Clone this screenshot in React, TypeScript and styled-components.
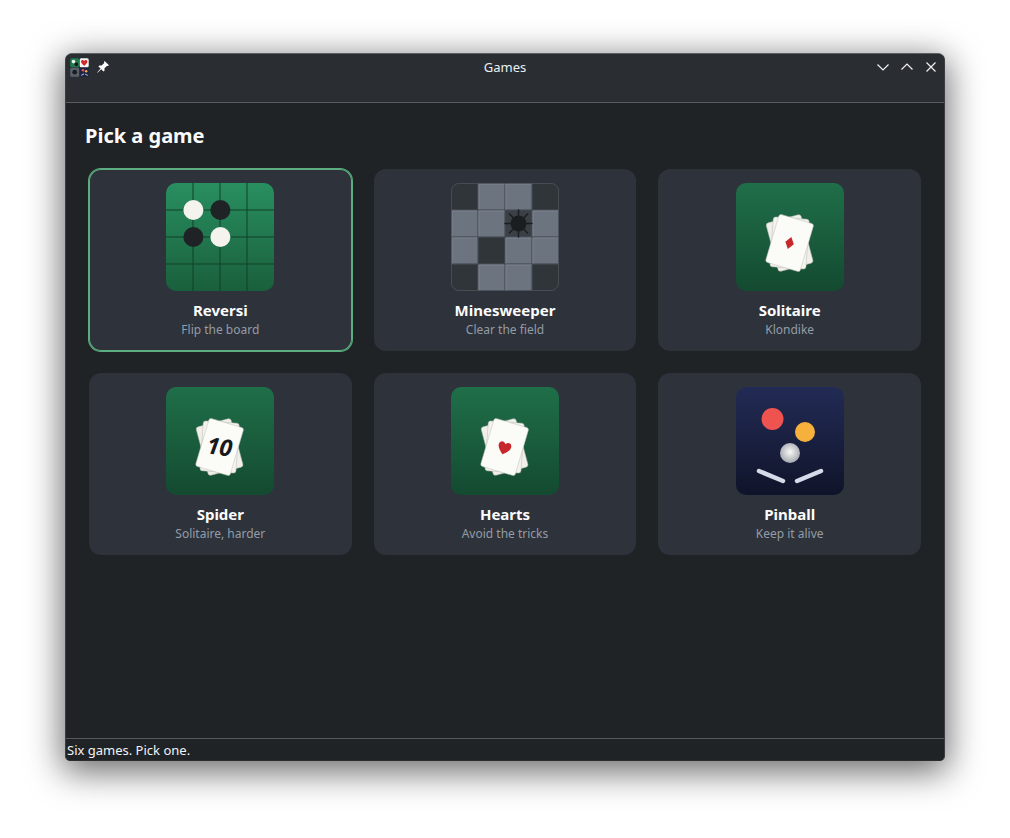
import React from 'react';
import styled, { createGlobalStyle } from 'styled-components';

const GlobalStyle = createGlobalStyle`
    html, body {
        margin: 0;
        height: 100%;
        background: #fff;
    }
    body {
        font-family: 'Noto Sans', sans-serif;
    }
`;

const Desktop = styled.div`
    box-sizing: border-box;
    width: 1010px;
    height: 838px;
    padding: 53px 65px 77px;
    overflow: hidden;
`;

const Window = styled.div`
    box-sizing: border-box;
    display: flex;
    flex-direction: column;
    height: 708px;
    background: #1f2326;
    border: 1px solid #3a3d41;
    border-top-color: #5c5f63;
    border-bottom-color: #2a2c30;
    border-radius: 7px 7px 5px 5px;
    box-shadow: 0 8px 34px 3px rgba(0, 0, 0, 0.58);
    overflow: hidden;
`;

const Header = styled.header`
    flex: none;
    height: 48px;
    background: #2a2e33;
    border-bottom: 1px solid #5a5e62;
`;

const TitleRow = styled.div`
    display: flex;
    align-items: center;
    height: 26px;
    padding: 0 5px 0 4px;
`;

const AppIcon = styled.svg`
    flex: none;
    width: 19px;
    height: 19px;
`;

const PinButton = styled.svg`
    flex: none;
    width: 14px;
    height: 14px;
    margin-left: 7px;
`;

const Title = styled.div`
    flex: 1;
    text-align: center;
    color: #eceff1;
    font-size: 13px;
    padding-left: 25px;
`;

const WindowControls = styled.div`
    display: flex;
    gap: 8px;
`;

const Control = styled.svg`
    display: block;
    width: 16px;
    height: 16px;
    fill: none;
    stroke: #f0f1f2;
    stroke-width: 1.2;
`;

const Content = styled.main`
    flex: 1;
    padding: 18px 23px 0 19px;
`;

const Heading = styled.h1`
    margin: 0 0 18px;
    color: #fcfcfc;
    font-size: 20px;
    font-weight: 700;
    line-height: 30px;
`;

const Grid = styled.div`
    display: grid;
    grid-template-columns: repeat(3, 1fr);
    gap: 22px;
    margin-left: 4px;
`;

const Card = styled.div<{ $selected?: boolean }>`
    box-sizing: border-box;
    height: 182px;
    display: flex;
    flex-direction: column;
    align-items: center;
    padding-top: 14px;
    background: #2e323b;
    border-radius: 12px;
    box-shadow: ${p => (p.$selected ? 'inset 0 0 0 1px #5cae80, 0 0 0 1px #5cae80' : 'none')};
`;

const Art = styled.svg`
    display: block;
    flex: none;
    width: 108px;
    height: 108px;
`;

const Name = styled.div`
    margin-top: 9px;
    color: #fcfcfc;
    font-size: 15px;
    font-weight: 700;
    line-height: 20px;
`;

const Description = styled.div`
    color: #949ca6;
    font-size: 12px;
    line-height: 17px;
    margin-top: 1px;
`;

const StatusBar = styled.footer`
    flex: none;
    height: 21px;
    border-top: 1px solid #55595d;
    padding-left: 1px;
    color: #f2f3f4;
    font-size: 13px;
    line-height: 23px;
`;

const felt = (id: string) => (
    <linearGradient id={id} x1="0" y1="0" x2="0" y2="1">
        <stop offset="0" stopColor="#1f6f49" />
        <stop offset="1" stopColor="#144a30" />
    </linearGradient>
);

const ReversiArt = () => (
    <>
        <defs>
            <linearGradient id="board" x1="0" y1="0" x2="0" y2="1">
                <stop offset="0" stopColor="#288f60" />
                <stop offset="1" stopColor="#1a5f3c" />
            </linearGradient>
        </defs>
        <rect width="108" height="108" rx="10" fill="url(#board)" />
        <path d="M27 0V108M54 0V108M81 0V108M0 27H108M0 54H108M0 81H108" stroke="#10402a" strokeWidth="1" />
        <circle cx="27.4" cy="27" r="10" fill="#f4f3ee" />
        <circle cx="54.4" cy="27" r="10" fill="#1f2326" />
        <circle cx="27.4" cy="54" r="10" fill="#1f2326" />
        <circle cx="54.4" cy="54" r="10" fill="#f4f3ee" />
    </>
);

const mineCells = ['dccd', 'ccmc', 'cdcc', 'dccd'];

const MinesweeperArt = () => (
    <>
        <defs>
            <clipPath id="mine-board">
                <rect width="108" height="108" rx="8" />
            </clipPath>
        </defs>
        <g clipPath="url(#mine-board)">
            <rect width="108" height="108" fill="#454b53" />
            {mineCells.map((row, y) =>
                row.split('').map((cell, x) => (
                    <g key={`${x}-${y}`}>
                        <rect
                            x={x * 27 + 0.6}
                            y={y * 27 + 0.6}
                            width="25.8"
                            height="25.8"
                            fill={cell === 'c' ? '#6c747f' : cell === 'd' ? '#30353a' : '#3b4046'}
                        />
                        {cell === 'c' && (
                            <path
                                d={`M${x * 27 + 1} ${y * 27 + 26.4}V${y * 27 + 1}H${x * 27 + 26.4}`}
                                fill="none"
                                stroke="#7f8792"
                                strokeWidth="0.9"
                            />
                        )}
                    </g>
                )),
            )}
        </g>
        <rect x="0.4" y="0.4" width="107.2" height="107.2" rx="8" fill="none" stroke="#4b5159" strokeWidth="0.8" />
        <g stroke="#1b1e21" strokeWidth="1.5" strokeLinecap="round">
            <path d="M67.5 27V54M54 40.5H81M58.5 31L76.5 50M76.5 31L58.5 50" />
        </g>
        <circle cx="67.5" cy="40.5" r="8" fill="#1b1e21" />
    </>
);

const PlayingCards = ({ children }: { children?: React.ReactNode }) => (
    <g transform="translate(53.6 60)">
        <rect x="-18" y="-25" width="36" height="50" rx="2.5" fill="#f0efe9" stroke="#b9bab4" strokeWidth="0.5" transform="rotate(-15)" />
        <rect x="-18" y="-25" width="36" height="50" rx="2.5" fill="#f4f3ee" stroke="#b9bab4" strokeWidth="0.5" transform="rotate(4)" />
        <g transform="rotate(16.5)">
            <rect x="-18" y="-25" width="36" height="50" rx="2.5" fill="#fbfbf8" stroke="#c2c3bd" strokeWidth="0.5" />
            {children}
        </g>
    </g>
);

const FeltArt = ({ id, children }: { id: string; children?: React.ReactNode }) => (
    <>
        <defs>{felt(id)}</defs>
        <rect width="108" height="108" rx="10" fill={`url(#${id})`} />
        <PlayingCards>{children}</PlayingCards>
    </>
);

const SolitaireArt = () => (
    <FeltArt id="felt-solitaire">
        <path d="M0 -6.2L4.4 0L0 6.2L-4.4 0Z" fill="#c7282b" />
    </FeltArt>
);

const SpiderArt = () => (
    <FeltArt id="felt-spider">
        <text
            x="0"
            y="8"
            textAnchor="middle"
            fontFamily="'Noto Sans', sans-serif"
            fontSize="23"
            fontWeight="700"
            fontStyle="italic"
            fill="#17191c"
            transform="rotate(-9)"
        >
            10
        </text>
    </FeltArt>
);

const HeartShape = () => (
    <path d="M0 7.6C-3.4 4.6 -6.4 2.2 -6.4 -1.4C-6.4 -5.4 -1.8 -6.2 0 -2.8C1.8 -6.2 6.4 -5.4 6.4 -1.4C6.4 2.2 3.4 4.6 0 7.6Z" fill="#c7282b" />
);

const HeartsArt = () => (
    <FeltArt id="felt-hearts">
        <HeartShape />
    </FeltArt>
);

const PinballArt = () => (
    <>
        <defs>
            <linearGradient id="table" x1="0" y1="0" x2="0" y2="1">
                <stop offset="0" stopColor="#222b55" />
                <stop offset="1" stopColor="#10142a" />
            </linearGradient>
            <radialGradient id="ball" cx="0.5" cy="0.45" r="0.55">
                <stop offset="0" stopColor="#f8f8f8" />
                <stop offset="1" stopColor="#a3a7ad" />
            </radialGradient>
        </defs>
        <rect width="108" height="108" rx="10" fill="url(#table)" />
        <circle cx="36.5" cy="32" r="11" fill="#ef5350" />
        <circle cx="69" cy="45" r="10" fill="#f6b13c" />
        <circle cx="54" cy="66" r="10" fill="url(#ball)" />
        <path d="M23 84L47 94M85 84L61 94" stroke="#d5dbe8" strokeWidth="4.5" strokeLinecap="round" />
    </>
);

const games = [
    { name: 'Reversi', description: 'Flip the board', art: <ReversiArt />, selected: true },
    { name: 'Minesweeper', description: 'Clear the field', art: <MinesweeperArt /> },
    { name: 'Solitaire', description: 'Klondike', art: <SolitaireArt /> },
    { name: 'Spider', description: 'Solitaire, harder', art: <SpiderArt /> },
    { name: 'Hearts', description: 'Avoid the tricks', art: <HeartsArt /> },
    { name: 'Pinball', description: 'Keep it alive', art: <PinballArt /> },
];

const App = () => {
    return (
        <Desktop>
            <GlobalStyle />
            <Window>
                <Header>
                    <TitleRow>
                        <AppIcon viewBox="0 0 19 19">
                            <rect x="0.2" y="0.2" width="9" height="9" rx="1.5" fill="#1f7a4f" />
                            <circle cx="3.5" cy="3.6" r="1.8" fill="#f4f3ee" />
                            <circle cx="6.4" cy="6.4" r="1.8" fill="#14181a" />
                            <rect x="9.7" y="0.2" width="9" height="9" rx="1.5" fill="#f6f5f1" />
                            <path d="M14.2 7.8C12.4 6.2 11 5 11 3.5C11 1.8 13.3 1.4 14.2 2.9C15.1 1.4 17.4 1.8 17.4 3.5C17.4 5 16 6.2 14.2 7.8Z" fill="#d3272c" />
                            <rect x="0.2" y="9.7" width="9" height="9" rx="1.5" fill="#5a616b" />
                            <circle cx="4.7" cy="14.2" r="2.4" fill="#1b1e21" />
                            <rect x="9.7" y="9.7" width="9" height="9" rx="1.5" fill="#1c2347" />
                            <circle cx="13" cy="12.3" r="1.3" fill="#ef5350" />
                            <circle cx="16.2" cy="13.3" r="1.2" fill="#f6b13c" />
                            <path d="M11.2 17.4L14 15.8M17.8 17.4L15.2 16.2" stroke="#d5dbe8" strokeWidth="0.9" />
                        </AppIcon>
                        <PinButton viewBox="0 0 14 14">
                            <path d="M8.6 1L13 5.2L12 6L11 5.8L8.4 8.4L8.6 10.6L7.5 11.5L5.2 9.2L1.6 12.8L1.2 12.4L4.6 8.6L2.4 6.4L3.3 5.4L5.6 5.6L8.2 3L8 2Z" fill="#fcfcfc" />
                        </PinButton>
                        <Title>Games</Title>
                        <WindowControls>
                            <Control viewBox="0 0 16 16">
                                <path d="M2.5 5.5L8 11L13.5 5.5" />
                            </Control>
                            <Control viewBox="0 0 16 16">
                                <path d="M2.5 10.5L8 5L13.5 10.5" />
                            </Control>
                            <Control viewBox="0 0 16 16">
                                <path d="M3.5 3.5L12.5 12.5M12.5 3.5L3.5 12.5" />
                            </Control>
                        </WindowControls>
                    </TitleRow>
                </Header>
                <Content>
                    <Heading>Pick a game</Heading>
                    <Grid>
                        {games.map(game => (
                            <Card key={game.name} $selected={game.selected}>
                                <Art viewBox="0 0 108 108">{game.art}</Art>
                                <Name>{game.name}</Name>
                                <Description>{game.description}</Description>
                            </Card>
                        ))}
                    </Grid>
                </Content>
                <StatusBar>Six games. Pick one.</StatusBar>
            </Window>
        </Desktop>
    );
};

export default App;
